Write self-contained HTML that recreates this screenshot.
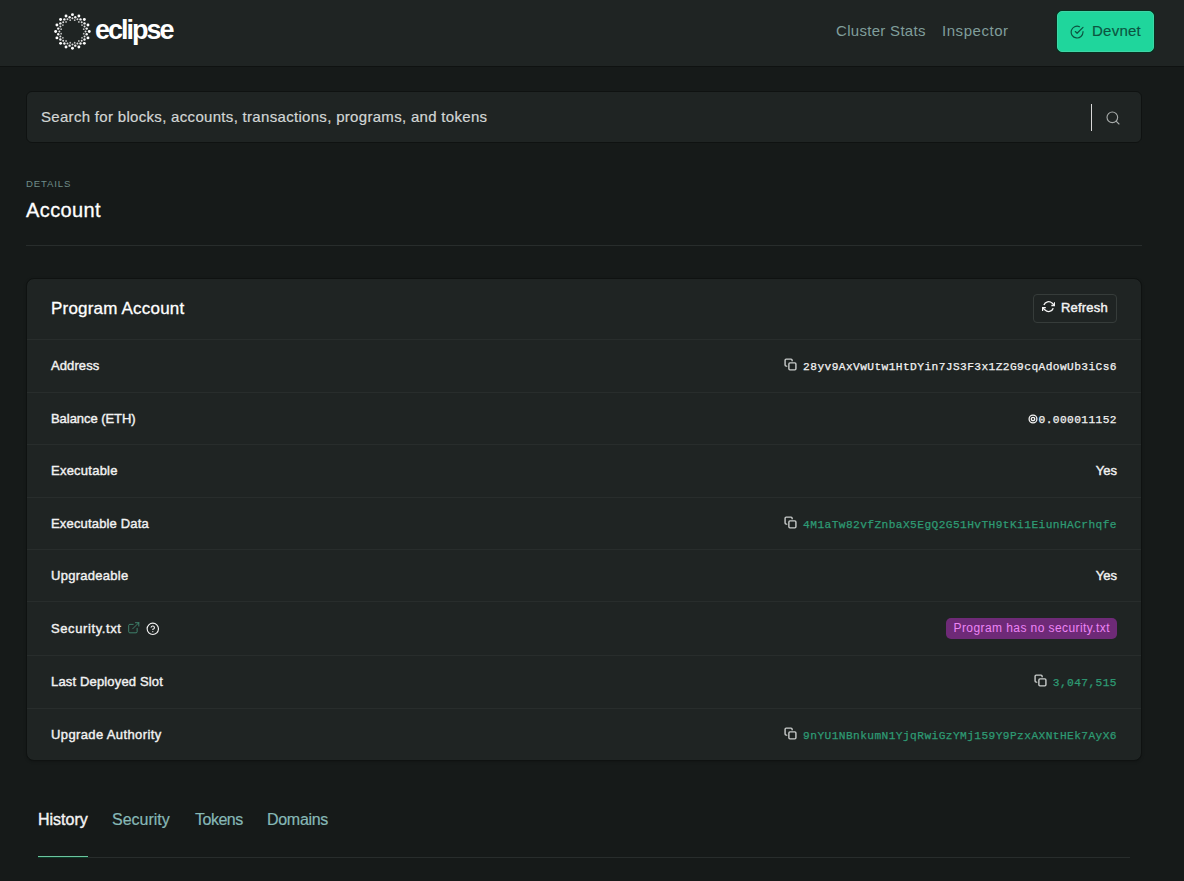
<!DOCTYPE html>
<html><head><meta charset="utf-8">
<style>
*{box-sizing:border-box;margin:0;padding:0}
html,body{width:1184px;height:881px;overflow:hidden;background:#161a19;font-family:"Liberation Sans",sans-serif;color:#fff}
.abs{position:absolute}
#hdr{left:0;top:0;width:1184px;height:67px;background:#1f2423;border-bottom:1px solid #0f1211}
#logo{left:52px;top:11px;width:40px;height:40px}
#brand{left:95px;top:12px;font-weight:bold;font-size:27px;letter-spacing:-2px;line-height:36px;white-space:nowrap}
.nav{top:21px;font-size:15px;letter-spacing:0.3px;line-height:20px;color:#809e9b;white-space:nowrap}
#devnet{left:1057px;top:11px;width:97px;height:41px;background:#1fd69c;border-radius:5px;border:1px solid #3fd4a6;box-shadow:0 0 0 1px #07301f}
#devnet span{position:absolute;left:34px;top:9px;font-size:15px;letter-spacing:0.25px;line-height:20px;color:#0c5440;-webkit-text-stroke:0.15px #0c5440}
#devnet svg{position:absolute;left:12px;top:13px}
#search{left:26px;top:91px;width:1116px;height:52px;background:#1f2423;border:1px solid #0f1211;border-radius:6px}
#search .ph{position:absolute;left:14px;top:15px;font-size:15px;letter-spacing:0.31px;-webkit-text-stroke:0.2px #d2d6d5;line-height:20px;color:#d2d6d5;white-space:nowrap}
#search .bar{position:absolute;left:1064px;top:12px;width:1px;height:27px;background:#d8d8d8}
#search svg{position:absolute;left:1078.4px;top:17.7px}
#pretitle{left:26px;top:178px;font-size:9.6px;line-height:12px;letter-spacing:0.85px;color:#6f8d89;white-space:nowrap}
#title{left:26px;top:198px;font-size:20px;letter-spacing:0.4px;-webkit-text-stroke:0.3px #fff;line-height:24px;white-space:nowrap}
#hr{left:26px;top:245px;width:1116px;height:1px;background:#282d2c}
#card{left:26px;top:278px;width:1116px;height:483px;background:#1f2423;border:1px solid #0f1211;border-radius:8px;box-shadow:0 1px 3px rgba(0,0,0,.2)}
#card .ch{position:absolute;left:0;top:0;width:100%;height:61px;border-bottom:1px solid #282d2c}
#card .ct{position:absolute;left:24px;top:19px;font-size:17px;letter-spacing:0.2px;-webkit-text-stroke:0.3px #fff;line-height:22px;white-space:nowrap}
#refresh{position:absolute;left:1006px;top:15px;width:84px;height:29px;border:1px solid #363c3a;border-radius:4px}
#refresh span{position:absolute;left:27px;top:4px;letter-spacing:0.2px;font-size:13px;line-height:18px;-webkit-text-stroke:0.4px #f4f4f4;color:#f4f4f4}
#refresh svg{position:absolute;left:7.8px;top:4.9px}
.row{position:absolute;left:0;width:100%;border-bottom:1px solid #282d2c}
.row.last{border-bottom:none}
.lbl{position:absolute;left:24px;letter-spacing:0.1px;font-size:13px;line-height:18px;-webkit-text-stroke:0.4px #f2f2f2;color:#f2f2f2;white-space:nowrap}
.val{position:absolute;right:24px;font-size:13px;line-height:18px;white-space:nowrap;color:#f2f2f2}
.yes{-webkit-text-stroke:0.4px #f2f2f2}
.mono{font-family:"Liberation Mono",monospace;font-size:11.2px;letter-spacing:0.42px;-webkit-text-stroke:0.25px currentColor}
.grn{color:#2e9b74}
.cp{display:inline-block;vertical-align:top;margin-right:6px;position:relative;top:1px}
.sol{display:inline-block;vertical-align:top;position:relative;top:3.5px;margin-right:1px}
.ext{position:absolute;left:75.5px;top:1px}
.help{position:absolute;left:94.5px;top:2px}
#badge{background:#6e2a77;color:#ec84f5;border-radius:5px;font-size:12px;letter-spacing:0.42px;line-height:21px;padding:0 7px;height:21px;display:inline-block;position:relative;top:-1px}
.tab{top:810px;font-size:16px;-webkit-text-stroke:0.2px currentColor;line-height:20px;color:#86b8b6;white-space:nowrap}
#tabline{left:38px;top:857px;width:1092px;height:1px;background:#282d2c}
#tabact{left:38px;top:856px;width:50px;height:1px;background:#6cc49f;box-shadow:0 1px 0 #0b3d28}
</style></head><body>
<div id="hdr" class="abs">
  <svg id="logo" class="abs" width="40" height="40" viewBox="0 0 40 40"><g fill="#fff"><circle cx="20.45" cy="3.65" r="1.45" fill-opacity="1.0"/><circle cx="26.88" cy="4.93" r="1.45" fill-opacity="1.0"/><circle cx="32.33" cy="8.57" r="1.45" fill-opacity="1.0"/><circle cx="35.97" cy="14.02" r="1.45" fill-opacity="1.0"/><circle cx="37.25" cy="20.45" r="1.45" fill-opacity="1.0"/><circle cx="35.97" cy="26.88" r="1.45" fill-opacity="1.0"/><circle cx="32.33" cy="32.33" r="1.45" fill-opacity="1.0"/><circle cx="26.88" cy="35.97" r="1.45" fill-opacity="1.0"/><circle cx="20.45" cy="37.25" r="1.45" fill-opacity="1.0"/><circle cx="14.02" cy="35.97" r="1.45" fill-opacity="1.0"/><circle cx="8.57" cy="32.33" r="1.45" fill-opacity="1.0"/><circle cx="4.93" cy="26.88" r="1.45" fill-opacity="1.0"/><circle cx="3.65" cy="20.45" r="1.45" fill-opacity="1.0"/><circle cx="4.93" cy="14.02" r="1.45" fill-opacity="1.0"/><circle cx="8.57" cy="8.57" r="1.45" fill-opacity="1.0"/><circle cx="14.02" cy="4.93" r="1.45" fill-opacity="1.0"/><circle cx="23.28" cy="6.23" r="1.2" fill-opacity="0.95"/><circle cx="28.51" cy="8.39" r="1.2" fill-opacity="0.95"/><circle cx="32.51" cy="12.39" r="1.2" fill-opacity="0.95"/><circle cx="34.67" cy="17.62" r="1.2" fill-opacity="0.95"/><circle cx="34.67" cy="23.28" r="1.2" fill-opacity="0.95"/><circle cx="32.51" cy="28.51" r="1.2" fill-opacity="0.95"/><circle cx="28.51" cy="32.51" r="1.2" fill-opacity="0.95"/><circle cx="23.28" cy="34.67" r="1.2" fill-opacity="0.95"/><circle cx="17.62" cy="34.67" r="1.2" fill-opacity="0.95"/><circle cx="12.39" cy="32.51" r="1.2" fill-opacity="0.95"/><circle cx="8.39" cy="28.51" r="1.2" fill-opacity="0.95"/><circle cx="6.23" cy="23.28" r="1.2" fill-opacity="0.95"/><circle cx="6.23" cy="17.62" r="1.2" fill-opacity="0.95"/><circle cx="8.39" cy="12.39" r="1.2" fill-opacity="0.95"/><circle cx="12.39" cy="8.39" r="1.2" fill-opacity="0.95"/><circle cx="17.62" cy="6.23" r="1.2" fill-opacity="0.95"/><circle cx="20.45" cy="7.35" r="1.0" fill-opacity="0.85"/><circle cx="25.46" cy="8.35" r="1.0" fill-opacity="0.85"/><circle cx="29.71" cy="11.19" r="1.0" fill-opacity="0.85"/><circle cx="32.55" cy="15.44" r="1.0" fill-opacity="0.85"/><circle cx="33.55" cy="20.45" r="1.0" fill-opacity="0.85"/><circle cx="32.55" cy="25.46" r="1.0" fill-opacity="0.85"/><circle cx="29.71" cy="29.71" r="1.0" fill-opacity="0.85"/><circle cx="25.46" cy="32.55" r="1.0" fill-opacity="0.85"/><circle cx="20.45" cy="33.55" r="1.0" fill-opacity="0.85"/><circle cx="15.44" cy="32.55" r="1.0" fill-opacity="0.85"/><circle cx="11.19" cy="29.71" r="1.0" fill-opacity="0.85"/><circle cx="8.35" cy="25.46" r="1.0" fill-opacity="0.85"/><circle cx="7.35" cy="20.45" r="1.0" fill-opacity="0.85"/><circle cx="8.35" cy="15.44" r="1.0" fill-opacity="0.85"/><circle cx="11.19" cy="11.19" r="1.0" fill-opacity="0.85"/><circle cx="15.44" cy="8.35" r="1.0" fill-opacity="0.85"/><circle cx="22.69" cy="9.17" r="0.9" fill-opacity="0.7"/><circle cx="26.84" cy="10.89" r="0.9" fill-opacity="0.7"/><circle cx="30.01" cy="14.06" r="0.9" fill-opacity="0.7"/><circle cx="31.73" cy="18.21" r="0.9" fill-opacity="0.7"/><circle cx="31.73" cy="22.69" r="0.9" fill-opacity="0.7"/><circle cx="30.01" cy="26.84" r="0.9" fill-opacity="0.7"/><circle cx="26.84" cy="30.01" r="0.9" fill-opacity="0.7"/><circle cx="22.69" cy="31.73" r="0.9" fill-opacity="0.7"/><circle cx="18.21" cy="31.73" r="0.9" fill-opacity="0.7"/><circle cx="14.06" cy="30.01" r="0.9" fill-opacity="0.7"/><circle cx="10.89" cy="26.84" r="0.9" fill-opacity="0.7"/><circle cx="9.17" cy="22.69" r="0.9" fill-opacity="0.7"/><circle cx="9.17" cy="18.21" r="0.9" fill-opacity="0.7"/><circle cx="10.89" cy="14.06" r="0.9" fill-opacity="0.7"/><circle cx="14.06" cy="10.89" r="0.9" fill-opacity="0.7"/><circle cx="18.21" cy="9.17" r="0.9" fill-opacity="0.7"/></g></svg>
  <div id="brand" class="abs">eclipse</div>
  <div class="abs nav" style="left:836px">Cluster Stats</div>
  <div class="abs nav" style="left:942px;letter-spacing:0.55px">Inspector</div>
  <div id="devnet" class="abs">
    <svg width="14.2" height="14.2" viewBox="0 0 24 24" fill="none" stroke="#0c5440" stroke-width="2" stroke-linecap="round" stroke-linejoin="round"><path d="M22 11.08V12a10 10 0 1 1-5.93-9.14"/><polyline points="22 4 12 14.01 9 11.01"/></svg>
    <span>Devnet</span>
  </div>
</div>
<div id="search" class="abs">
  <div class="ph">Search for blocks, accounts, transactions, programs, and tokens</div>
  <div class="bar"></div>
  <svg width="16" height="16" viewBox="0 0 24 24" fill="none" stroke="#a6aaa9" stroke-width="1.7" stroke-linecap="round" stroke-linejoin="round"><circle cx="11" cy="11" r="8"/><line x1="21" y1="21" x2="16.65" y2="16.65"/></svg>
</div>
<div id="pretitle" class="abs">DETAILS</div>
<div id="title" class="abs">Account</div>
<div id="hr" class="abs"></div>
<div id="card" class="abs">
  <div class="ch">
    <div class="ct">Program Account</div>
    <div id="refresh"><svg width="13.2" height="13.2" viewBox="0 0 24 24" fill="none" stroke="#f4f4f4" stroke-width="2.4" stroke-linecap="butt" stroke-linejoin="miter"><polyline points="23 4 23 10 17 10"/><polyline points="1 20 1 14 7 14"/><path d="M3.51 9a9 9 0 0 1 14.85-3.36L23 10M1 14l4.64 4.36A9 9 0 0 0 20.49 15"/></svg><span>Refresh</span></div>
  </div>
    <div class="row" style="top:61px;height:53px"><div class="lbl" style="top:17px;letter-spacing:0.1px">Address</div><div class="val" style="top:17px"><svg class="cp" width="13" height="13" viewBox="0 0 24 24" fill="none" stroke="#c9cccb" stroke-width="2.6" stroke-linecap="round" stroke-linejoin="round"><rect x="9" y="9" width="13" height="13" rx="2" ry="2"/><path d="M5 15H4a2 2 0 0 1-2-2V4a2 2 0 0 1 2-2h9a2 2 0 0 1 2 2v1"/></svg><span class="mono">28yv9AxVwUtw1HtDYin7JS3F3x1Z2G9cqAdowUb3iCs6</span></div></div>
  <div class="row" style="top:114px;height:52px"><div class="lbl" style="top:17px;letter-spacing:-0.05px">Balance (ETH)</div><div class="val" style="top:17px"><svg class="sol" width="10" height="10" viewBox="0 0 10 10" fill="none" stroke="#f4f4f4" stroke-width="1.3"><circle cx="5" cy="5" r="3.9"/><circle cx="5" cy="5" r="1.7"/></svg><span class="mono">0.000011152</span></div></div>
  <div class="row" style="top:166px;height:53px"><div class="lbl" style="top:17px;letter-spacing:0.24px">Executable</div><div class="val yes" style="top:17px">Yes</div></div>
  <div class="row" style="top:219px;height:52px"><div class="lbl" style="top:17px;letter-spacing:0.17px">Executable Data</div><div class="val" style="top:17px"><svg class="cp" width="13" height="13" viewBox="0 0 24 24" fill="none" stroke="#c9cccb" stroke-width="2.6" stroke-linecap="round" stroke-linejoin="round"><rect x="9" y="9" width="13" height="13" rx="2" ry="2"/><path d="M5 15H4a2 2 0 0 1-2-2V4a2 2 0 0 1 2-2h9a2 2 0 0 1 2 2v1"/></svg><span class="mono grn">4M1aTw82vfZnbaX5EgQ2G51HvTH9tKi1EiunHACrhqfe</span></div></div>
  <div class="row" style="top:271px;height:52px"><div class="lbl" style="top:17px;letter-spacing:0.27px">Upgradeable</div><div class="val yes" style="top:17px">Yes</div></div>
  <div class="row" style="top:323px;height:54px"><div class="lbl" style="top:18px;letter-spacing:0.6px">Security.txt<svg class="ext" width="13.5" height="13.5" viewBox="0 0 24 24" fill="none" stroke="#4aa283" stroke-width="1.3" stroke-linecap="round" stroke-linejoin="round"><path d="M18 13v6a2 2 0 0 1-2 2H5a2 2 0 0 1-2-2V8a2 2 0 0 1 2-2h6"/><polyline points="15 3 21 3 21 9"/><line x1="10" y1="14" x2="21" y2="3"/></svg><svg class="help" width="13.6" height="13.6" viewBox="0 0 24 24" fill="none" stroke="#f2f2f2" stroke-width="2" stroke-linecap="round" stroke-linejoin="round"><circle cx="12" cy="12" r="10"/><path d="M9.09 9a3 3 0 0 1 5.83 1c0 2-3 3-3 3"/><line x1="12" y1="17" x2="12.01" y2="17"/></svg></div><div class="val" style="top:17px"><span id="badge">Program has no security.txt</span></div></div>
  <div class="row" style="top:377px;height:53px"><div class="lbl" style="top:17px;letter-spacing:0.16px">Last Deployed Slot</div><div class="val" style="top:17px"><svg class="cp" width="13" height="13" viewBox="0 0 24 24" fill="none" stroke="#c9cccb" stroke-width="2.6" stroke-linecap="round" stroke-linejoin="round"><rect x="9" y="9" width="13" height="13" rx="2" ry="2"/><path d="M5 15H4a2 2 0 0 1-2-2V4a2 2 0 0 1 2-2h9a2 2 0 0 1 2 2v1"/></svg><span class="mono grn">3,047,515</span></div></div>
  <div class="row last" style="top:430px;height:52px"><div class="lbl" style="top:17px;letter-spacing:0.38px">Upgrade Authority</div><div class="val" style="top:17px"><svg class="cp" width="13" height="13" viewBox="0 0 24 24" fill="none" stroke="#c9cccb" stroke-width="2.6" stroke-linecap="round" stroke-linejoin="round"><rect x="9" y="9" width="13" height="13" rx="2" ry="2"/><path d="M5 15H4a2 2 0 0 1-2-2V4a2 2 0 0 1 2-2h9a2 2 0 0 1 2 2v1"/></svg><span class="mono grn">9nYU1NBnkumN1YjqRwiGzYMj159Y9PzxAXNtHEk7AyX6</span></div></div>
</div>
<div class="abs tab" style="left:38px;color:#f4f4f4;-webkit-text-stroke:0.4px #f4f4f4">History</div>
<div class="abs tab" style="left:112px">Security</div>
<div class="abs tab" style="left:195px;letter-spacing:-0.5px">Tokens</div>
<div class="abs tab" style="left:267px;letter-spacing:-0.3px">Domains</div>
<div id="tabline" class="abs"></div>
<div id="tabact" class="abs"></div>
</body></html>
